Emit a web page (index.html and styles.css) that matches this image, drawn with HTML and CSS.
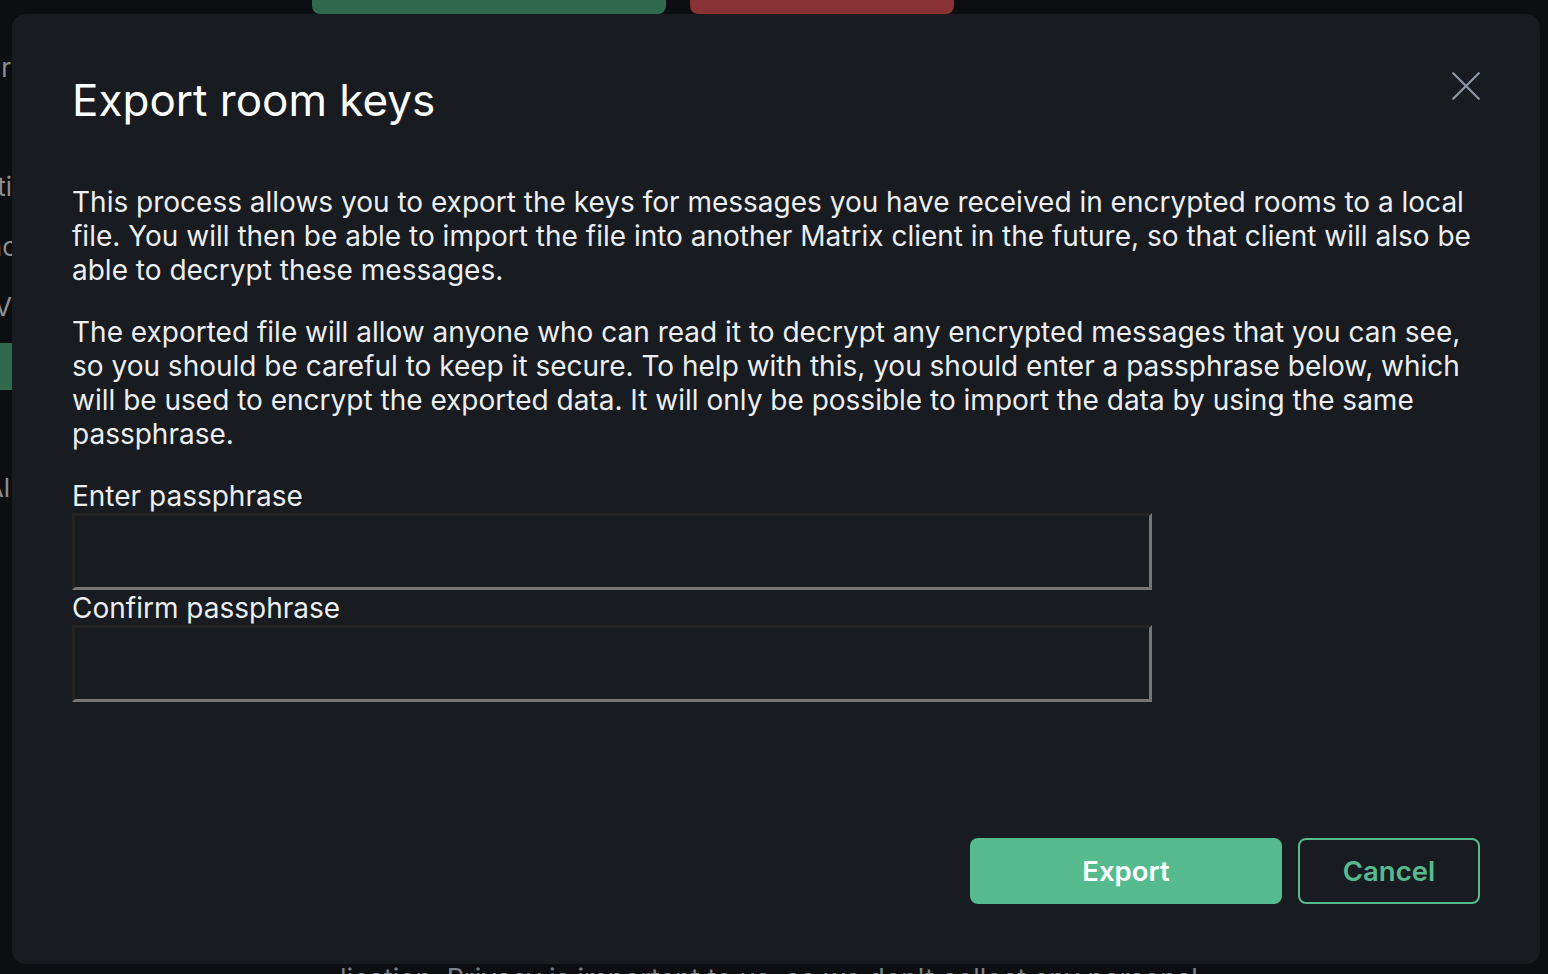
FILE: index.html
```html
<!DOCTYPE html>
<html lang="en">
<head>
<meta charset="utf-8">
<title>Export room keys</title>
<link rel="stylesheet" href="styles.css">
</head>
<body>
<div class="backdrop">
  <div class="bg-btn bg-green"></div>
  <div class="bg-btn bg-red"></div>
  <div class="bg-side">
    <span class="bg-frag f1">ar</span>
    <span class="bg-frag f2">ti</span>
    <span class="bg-frag f3">nc</span>
    <span class="bg-frag f4">V</span>
    <span class="bg-block"></span>
    <span class="bg-frag f5">Al</span>
  </div>
  <div class="bg-bottom">lication. Privacy is important to us, so we don't collect any personal</div>
</div>

<div class="dialog" role="dialog" aria-labelledby="dlg-title">
  <div class="dialog-head">
    <h1 id="dlg-title" class="dialog-title">Export room keys</h1>
    <button class="close" aria-label="Close">
      <svg viewBox="0 0 28 28" width="28" height="28"><path d="M1.2 1.2 L26.8 26.8 M26.8 1.2 L1.2 26.8" stroke="#8d97a5" stroke-width="2.2" stroke-linecap="round" fill="none"/></svg>
    </button>
  </div>
  <div class="dialog-body">
    <p>This process allows you to export the keys for messages you have received in encrypted rooms to a local file. You will then be able to import the file into another Matrix client in the future, so that client will also be able to decrypt these messages.</p>
    <p>The exported file will allow anyone who can read it to decrypt any encrypted messages that you can see, so you should be careful to keep it secure. To help with this, you should enter a passphrase below, which will be used to encrypt the exported data. It will only be possible to import the data by using the same passphrase.</p>
    <div class="fields">
      <label class="field-label" for="p1">Enter passphrase</label>
      <input class="field-input" id="p1" type="password">
      <label class="field-label" for="p2">Confirm passphrase</label>
      <input class="field-input" id="p2" type="password">
    </div>
  </div>
  <div class="dialog-buttons">
    <button class="btn btn-primary">Export</button>
    <button class="btn btn-outline">Cancel</button>
  </div>
</div>
</body>
</html>
```
FILE: styles.css
```css
html, body {
  margin: 0;
  padding: 0;
  width: 100%;
  height: 100%;
  background: #0c0e11;
  overflow: hidden;
  font-family: Inter, "Noto Sans", sans-serif;
}

.backdrop {
  position: absolute;
  inset: 0;
}

.bg-btn {
  position: absolute;
  top: -20px;
  height: 34px;
  border-radius: 8px;
}
.bg-green { left: 312px; width: 354px; background: #2f6a4f; }
.bg-red { left: 690px; width: 264px; background: #8a3336; }

.bg-side {
  position: absolute;
  left: -48px;
  top: 0;
  width: 60px;
  height: 600px;
  color: #8b8f95;
  font-size: 26px;
}
.bg-frag {
  position: absolute;
  right: 0;
  line-height: 30px;
  text-align: right;
}
.f1 { top: 53px; right: 1px; }
.f2 { top: 172px; right: 0; }
.f3 { top: 232px; right: -5px; }
.f4 { top: 292px; right: 0; }
.f5 { top: 473px; right: 2px; }
.bg-block {
  position: absolute;
  right: 0;
  top: 343px;
  width: 30px;
  height: 47px;
  background: #2f6a4f;
}

.bg-bottom {
  position: absolute;
  left: 340px;
  top: 962px;
  color: #7d8188;
  font-size: 27px;
  white-space: nowrap;
}

.dialog {
  position: absolute;
  left: 12px;
  top: 14px;
  width: 1528px;
  height: 950px;
  box-sizing: border-box;
  background: #181b20;
  border-radius: 14px;
  padding: 56px 60px 60px 60px;
  display: flex;
  flex-direction: column;
  color: #ffffff;
}

.dialog-head {
  display: flex;
  justify-content: space-between;
  align-items: flex-start;
}

.dialog-title {
  margin: 0;
  font-size: 44px;
  font-weight: 400;
  line-height: 60px;
  color: #ffffff;
}

.close {
  background: none;
  border: 0;
  padding: 0;
  margin: 2px 0 0 0;
  width: 28px;
  height: 28px;
  display: flex;
}

.dialog-body {
  margin-top: 55px;
  margin-right: -8px;
  font-size: 28px;
  line-height: 34px;
  color: #eceef1;
  flex: 1;
}

.dialog-body p {
  margin: 0 0 28px 0;
}

.fields {
  display: flex;
  flex-direction: column;
  align-items: flex-start;
}

.field-label {
  line-height: 34px;
  font-size: 28px;
}

.field-input {
  width: 1080px;
  height: 77px;
  box-sizing: border-box;
  margin: 0 0 1px 0;
  background: transparent;
  border: 3px solid #767676;
  border-top-color: #252321;
  border-left-color: #252321;
  color: #fff;
  font-size: 24px;
}

.dialog-buttons {
  display: flex;
  justify-content: flex-end;
  gap: 16px;
}

.btn {
  height: 66px;
  border-radius: 8px;
  font-family: Inter, "Noto Sans", sans-serif;
  font-size: 27.5px;
  font-weight: 600;
  box-sizing: border-box;
}

.btn-primary {
  width: 312px;
  background: #56ba8f;
  border: 0;
  color: #ffffff;
}

.btn-outline {
  width: 182px;
  background: transparent;
  border: 2px solid #56ba8f;
  color: #56ba8f;
}
```
